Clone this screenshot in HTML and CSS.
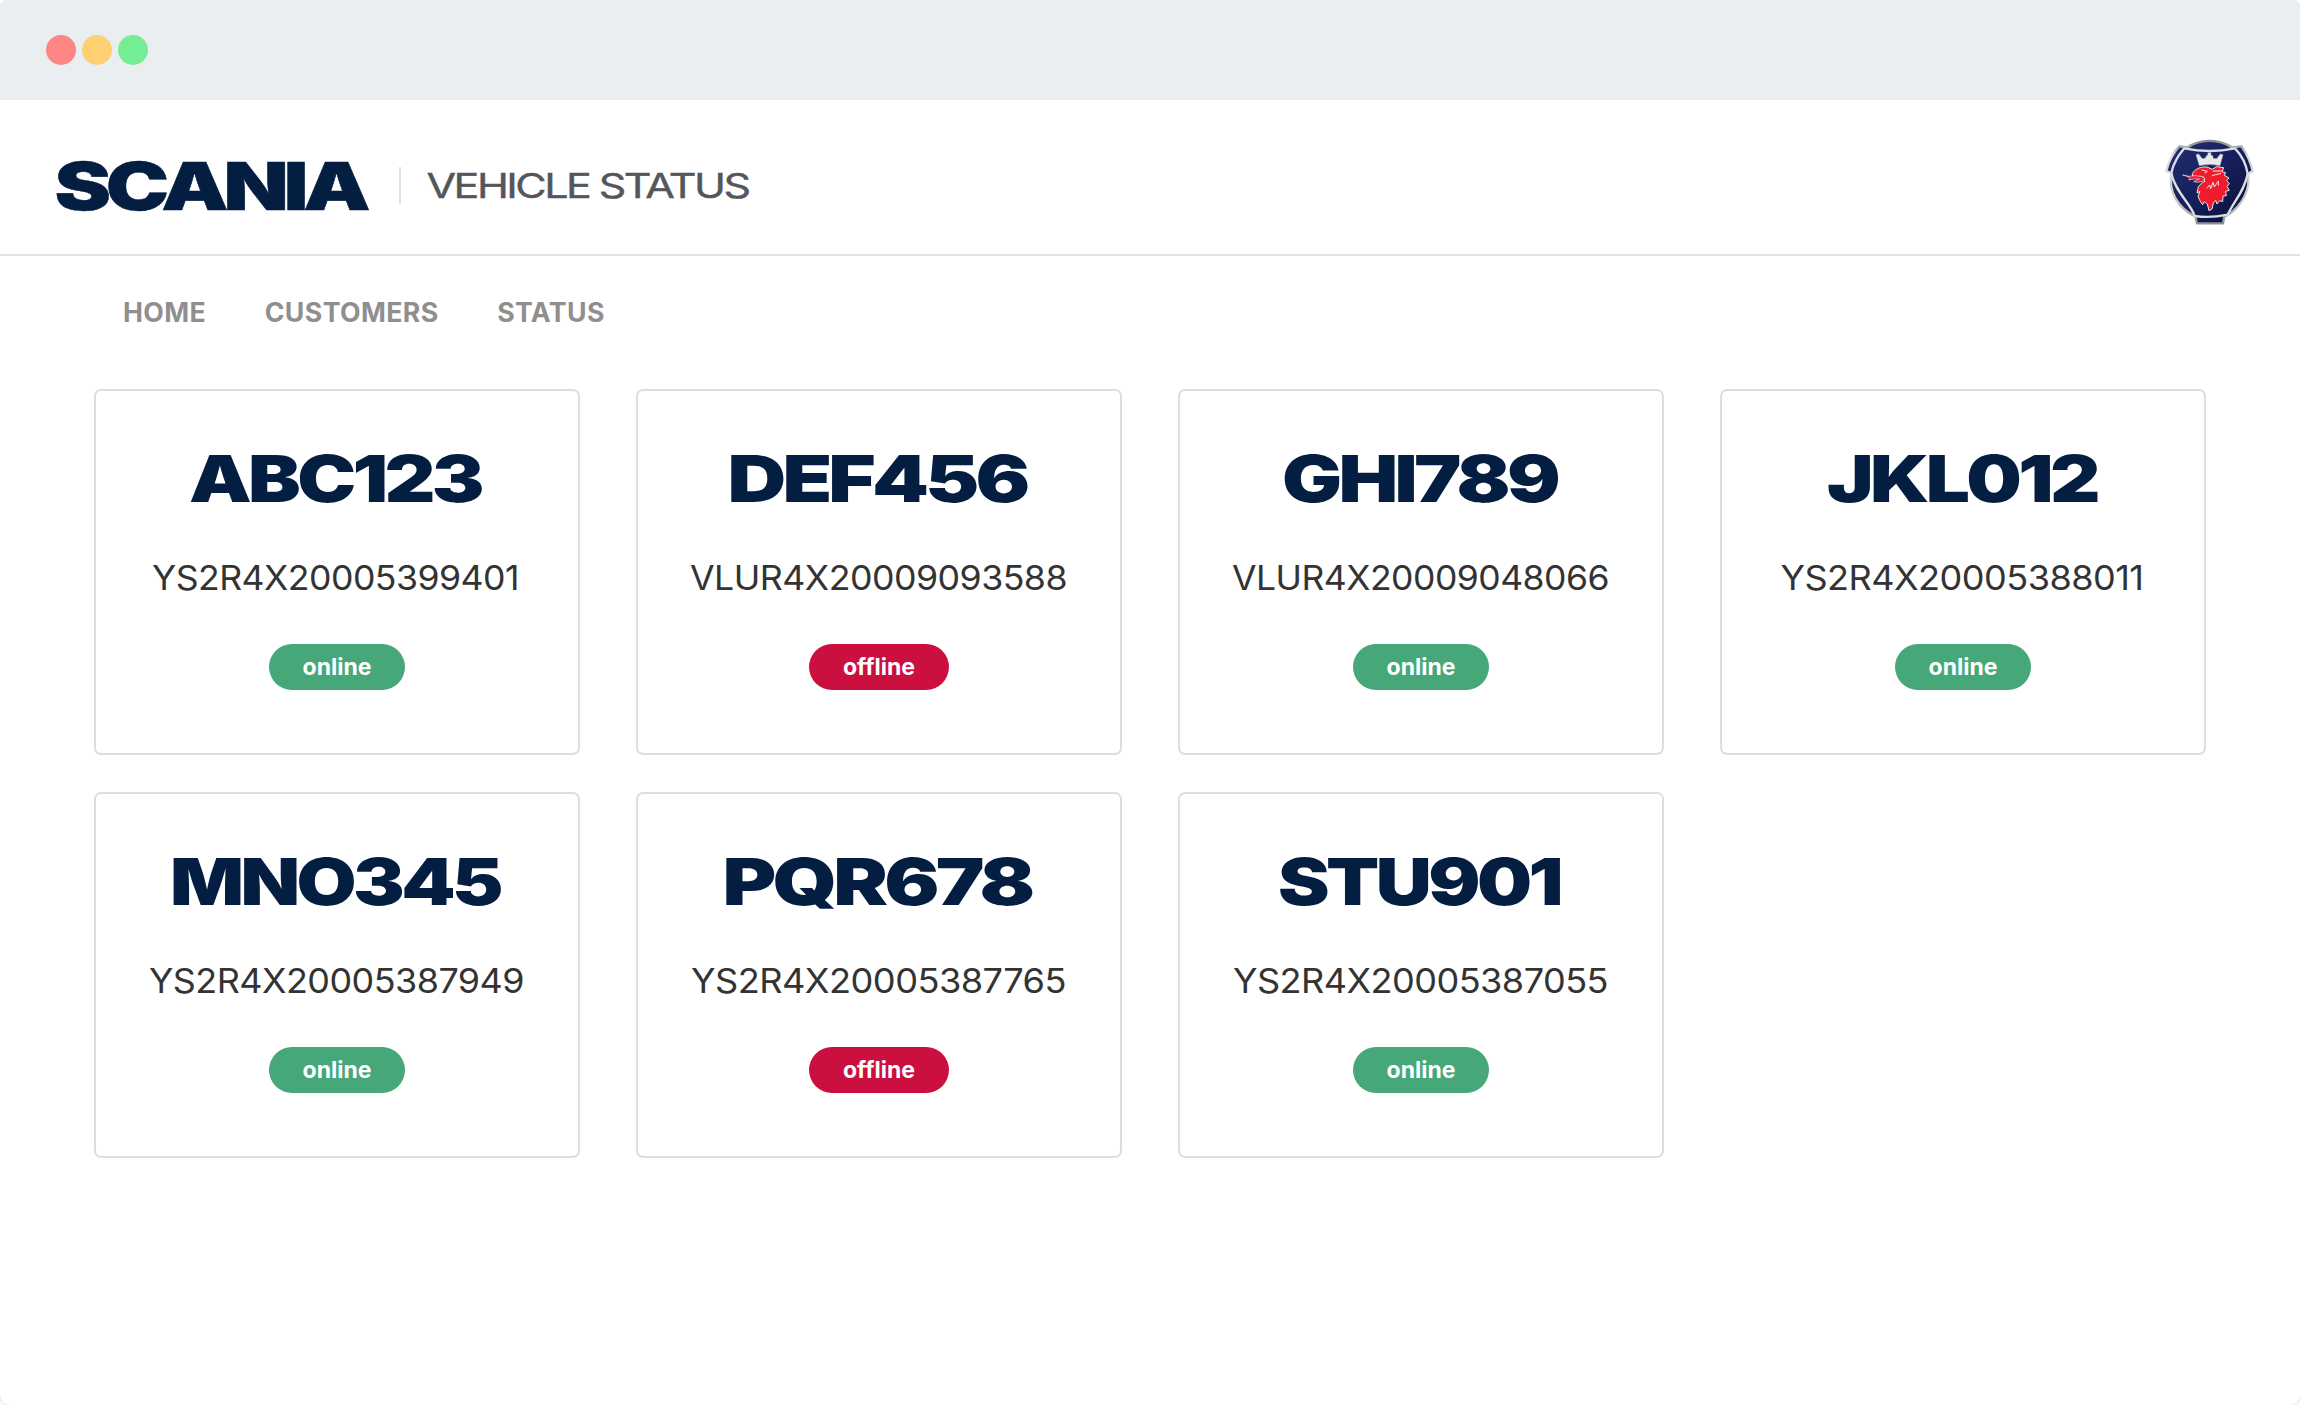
FILE: index.html
```html
<!DOCTYPE html>
<html lang="en">
<head>
<meta charset="utf-8">
<title>Vehicle Status</title>
<link rel="stylesheet" href="styles.css">
</head>
<body>
<div class="window">
  <div class="chrome"><span class="dot red"></span><span class="dot yellow"></span><span class="dot green"></span></div>
  <header class="header">
    <svg class="logo" viewBox="0 0 318 56" role="img" aria-label="Scania"><text class="logo-text" x="0.5" y="51.5" textLength="311" lengthAdjust="spacingAndGlyphs">SCANIA</text></svg>
    <span class="divider"></span>
    <svg class="title" viewBox="0 0 330 40"><text class="title-text" x="0.5" y="31" textLength="322" lengthAdjust="spacingAndGlyphs">VEHICLE STATUS</text></svg>
    <svg class="emblem" viewBox="72 54 273 258" aria-hidden="true">
      <defs>
        <linearGradient id="navy" x1="0" y1="0" x2="1" y2="1"><stop offset="0" stop-color="#24306e"/><stop offset=".5" stop-color="#141f5c"/><stop offset="1" stop-color="#0b0f35"/></linearGradient>
        <linearGradient id="silver" x1="0" y1="0" x2="0" y2="1"><stop offset="0" stop-color="#85898e"/><stop offset=".2" stop-color="#dcdee1"/><stop offset=".75" stop-color="#c5c7ca"/><stop offset="1" stop-color="#8d8f93"/></linearGradient>
      </defs>
      <g fill="url(#navy)" stroke="url(#silver)" stroke-width="7" stroke-linejoin="round">
        <path d="M118 76L143 79C181 53 237 53 275 79L304 76C321 99 332 122 338 150L324 158C332 204 309 252 263 282L253 286L249 307H171L166 286C112 260 85 212 94 156L79 150C86 121 98 98 118 76Z"/>
        <path fill="none" stroke="#dcdee1" d="M133 82C181 92 237 92 285 82C304 102 318 125 323 158C315 207 282 241 263 281Q209 292 164 285C151 246 105 212 94 157C100 124 116 103 133 82Z"/>
      </g>
      <g stroke="#e6e7e9" stroke-width="3" stroke-linejoin="round">
        <path fill="#e8e9ea" stroke="#a9acb2" stroke-width="1.5" d="M178 134L168 101L176 99L187 113L197 111L198 105L203 103L204 95H213V103L219 105L219 112L230 113L241 99L249 101L240 134Q209 127 178 134Z"/>
        <path fill="#f01c2d" d="M157 158C166 143 181 137 201 138L217 145L229 137L251 140L246 152L257 155L253 163L267 171L260 179L268 188L261 196L268 208L257 211L259 224L249 225L248 242L239 239L231 249L227 238L220 246L216 264L207 269L202 249L193 242L188 251L179 238L174 226L180 211L171 216L175 197L187 184L195 181L191 168Q175 164 170 169L158 170Z"/>
        <path fill="#f01c2d" stroke-width="2" d="M128 162Q147 169 164 164L184 166L194 173L187 181L173 184L161 182L178 174Q158 173 146 177Q157 169 128 162Z"/>
      </g>
      <g fill="none" stroke="#f3e5e8" stroke-width="3"><path d="M185 147L202 151L194 157M218 150H245M216 164L243 157M200 202L209 192L212 203L219 184L223 198L235 180V194"/></g>
    </svg>
  </header>
  <nav class="nav"><a>HOME</a><a>CUSTOMERS</a><a>STATUS</a></nav>
  <main class="grid">
    <article class="card">
      <svg class="plate" viewBox="0 0 482 70"><text x="239" y="57" textLength="292" lengthAdjust="spacingAndGlyphs">ABC123</text></svg>
      <svg class="vin" viewBox="0 0 482 40"><text x="239.5" y="30.3" textLength="367" lengthAdjust="spacingAndGlyphs">YS2R4X20005399401</text></svg>
      <span class="badge online">online</span>
    </article>
    <article class="card">
      <svg class="plate" viewBox="0 0 482 70"><text x="239" y="57" textLength="299" lengthAdjust="spacingAndGlyphs">DEF456</text></svg>
      <svg class="vin" viewBox="0 0 482 40"><text x="240.5" y="30.3" textLength="377" lengthAdjust="spacingAndGlyphs">VLUR4X20009093588</text></svg>
      <span class="badge offline">offline</span>
    </article>
    <article class="card">
      <svg class="plate" viewBox="0 0 482 70"><text x="239.5" y="57" textLength="275" lengthAdjust="spacingAndGlyphs">GHI789</text></svg>
      <svg class="vin" viewBox="0 0 482 40"><text x="240.5" y="30.3" textLength="377" lengthAdjust="spacingAndGlyphs">VLUR4X20009048066</text></svg>
      <span class="badge online">online</span>
    </article>
    <article class="card">
      <svg class="plate" viewBox="0 0 482 70"><text x="240" y="57" textLength="270" lengthAdjust="spacingAndGlyphs">JKL012</text></svg>
      <svg class="vin" viewBox="0 0 482 40"><text x="240" y="30.3" textLength="363" lengthAdjust="spacingAndGlyphs">YS2R4X20005388011</text></svg>
      <span class="badge online">online</span>
    </article>
    <article class="card">
      <svg class="plate" viewBox="0 0 482 70"><text x="239" y="57" textLength="330" lengthAdjust="spacingAndGlyphs">MNO345</text></svg>
      <svg class="vin" viewBox="0 0 482 40"><text x="240.5" y="30.3" textLength="375" lengthAdjust="spacingAndGlyphs">YS2R4X20005387949</text></svg>
      <span class="badge online">online</span>
    </article>
    <article class="card">
      <svg class="plate" viewBox="0 0 482 70"><text x="239" y="57" textLength="309" lengthAdjust="spacingAndGlyphs">PQR678</text></svg>
      <svg class="vin" viewBox="0 0 482 40"><text x="240.5" y="30.3" textLength="375" lengthAdjust="spacingAndGlyphs">YS2R4X20005387765</text></svg>
      <span class="badge offline">offline</span>
    </article>
    <article class="card">
      <svg class="plate" viewBox="0 0 482 70"><text x="239" y="57" textLength="282" lengthAdjust="spacingAndGlyphs">STU901</text></svg>
      <svg class="vin" viewBox="0 0 482 40"><text x="240.5" y="30.3" textLength="375" lengthAdjust="spacingAndGlyphs">YS2R4X20005387055</text></svg>
      <span class="badge online">online</span>
    </article>
  </main>
</div>
</body>
</html>
```
FILE: styles.css
```css
* { box-sizing: border-box; }
body { margin: 0; background: #fff; font-family: Inter, "Liberation Sans", sans-serif; }
svg { display: block; overflow: visible; flex: none; }
.window { height: 1405px; background: #fff; border-radius: 9px; overflow: hidden; box-shadow: 0 0 2px rgba(0, 0, 0, .3); }
.chrome { height: 100px; background: #e9eff1; display: flex; align-items: center; gap: 6px; padding-left: 46px; }
.dot { width: 30px; height: 30px; border-radius: 50%; }
.red { background: #ff8585; }
.yellow { background: #ffd071; }
.green { background: #74ed94; }

.header { height: 156px; border-bottom: 2px solid #e1e1e1; display: flex; align-items: flex-start; padding: 0 45px 0 54px; }
.logo { width: 318px; height: 56px; margin-top: 58px; }
.logo-text { font-size: 66px; font-weight: 900; fill: #041e42; letter-spacing: -4px; stroke: #041e42; stroke-width: .5px; }
.divider { width: 2px; height: 37px; margin: 67px 25px 0 27px; background: #e1e1e1; }
.title { width: 330px; height: 40px; margin-top: 67px; }
.title-text { font-size: 34px; font-weight: 400; fill: #53565a; letter-spacing: -2px; stroke: #53565a; stroke-width: .4px; }
.emblem { width: 91px; height: 86px; margin: 39px 0 0 auto; }

.nav { height: 133px; display: flex; gap: 58.5px; padding: 38.5px 0 0 123px; font-size: 26.7px; line-height: 34px; font-weight: 700; letter-spacing: .4px; color: #8f8f8f; }

.grid { display: grid; grid-template-columns: repeat(4, 486px); grid-auto-rows: 366px; gap: 37px 56px; padding-left: 94px; }
.card { border: 2px solid #dedede; border-radius: 7px; display: flex; flex-direction: column; align-items: center; padding-top: 54px; }
.plate { width: 482px; height: 70px; font-size: 64.5px; font-weight: 900; letter-spacing: -3px; fill: #041e42; }
.plate text, .vin text { text-anchor: middle; }
.vin { width: 482px; height: 40px; margin-top: 45px; font-size: 33.5px; font-weight: 400; fill: #333; letter-spacing: -.5px; }
.badge { height: 46px; width: 136px; margin-top: 44px; border-radius: 23px; color: #fff; font-size: 23px; line-height: 46px; font-weight: 700; text-align: center; }
.online { background: #46a778; }
.offline { width: 140px; background: #cb0f3e; }
```
